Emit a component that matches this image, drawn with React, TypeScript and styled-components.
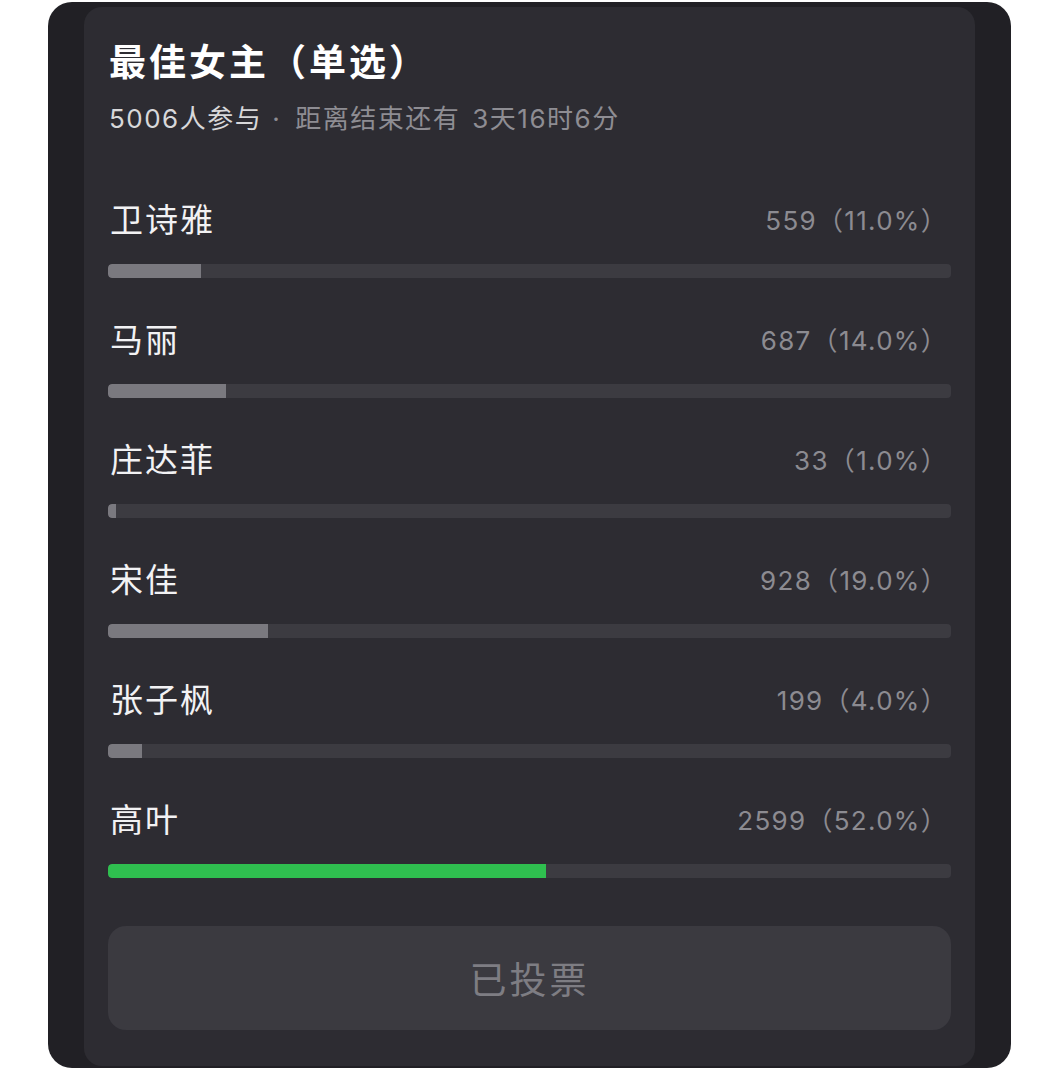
import React from "react";
import styled, { createGlobalStyle } from "styled-components";

const Global = createGlobalStyle`
  html, body { margin: 0; padding: 0; background: #ffffff; }
  body { font-family: Inter, "Noto Sans CJK SC", sans-serif; }
`;

const Page = styled.div`
  width: 1060px;
  height: 1080px;
  padding: 2px 0 0 48px;
  box-sizing: border-box;
`;

const Frame = styled.div`
  width: 963px;
  height: 1066px;
  box-sizing: border-box;
  background: #212025;
  border-radius: 24px;
  padding: 5px 36px 2px 36px;
  display: flex;
`;

const Card = styled.div`
  flex: 1;
  background: #2d2c32;
  border-radius: 18px;
  padding: 29px 24px 36px 24px;
  display: flex;
  flex-direction: column;
`;

const Title = styled.div`
  font-family: "Noto Sans CJK SC", sans-serif;
  font-size: 37px;
  line-height: 48px;
  font-weight: 700;
  color: #ffffff;
  letter-spacing: 3px;
  padding-left: 1px;
`;

const Sub = styled.div`
  margin-top: 18px;
  font-size: 26px;
  line-height: 34px;
  letter-spacing: 1.5px;
  color: #8e8d93;
  padding-left: 1px;
`;

const SubStrong = styled.span`
  color: #d8d8da;
`;

const Dot = styled.span`
  margin: 0 14px 0 10px;
`;

const Gap = styled.span`
  display: inline-block;
  width: 12px;
`;

const List = styled.div`
  margin-top: 60px;
  display: flex;
  flex-direction: column;
  gap: 38px;
`;

const Row = styled.div`
  display: flex;
  flex-direction: column;
  gap: 24px;
`;

const Head = styled.div`
  display: flex;
  justify-content: space-between;
  align-items: center;
  height: 44px;
`;

const Name = styled.span`
  font-family: "Noto Sans CJK SC", sans-serif;
  font-size: 33px;
  letter-spacing: 2px;
  color: #f2f2f4;
  padding-left: 2px;
`;

const Count = styled.span`
  font-size: 26px;
  letter-spacing: 1.3px;
  color: #8c8b91;
  margin-right: 3px;
`;

const Track = styled.div`
  height: 14px;
  background: #3c3b41;
  border-radius: 4px;
  overflow: hidden;
  display: flex;
`;

const Fill = styled.div<{ $win?: boolean }>`
  height: 100%;
  background: ${(p) => (p.$win ? "#2fbf4f" : "#7a797f")};
  border-radius: 4px 0 0 4px;
`;

const Button = styled.div`
  margin-top: 48px;
  height: 104px;
  border-radius: 18px;
  background: #3b3a40;
  display: flex;
  align-items: center;
  justify-content: center;
  font-family: "Noto Sans CJK SC", sans-serif;
  font-size: 37px;
  color: #7e7d83;
  letter-spacing: 3px;
`;

const items = [
  { name: "卫诗雅", count: 559, pct: 11 },
  { name: "马丽", count: 687, pct: 14 },
  { name: "庄达菲", count: 33, pct: 1 },
  { name: "宋佳", count: 928, pct: 19 },
  { name: "张子枫", count: 199, pct: 4 },
  { name: "高叶", count: 2599, pct: 52, win: true },
];

export default function App() {
  return (
    <>
      <Global />
      <Page>
        <Frame>
          <Card>
            <Title>最佳女主（单选）</Title>
            <Sub>
              <SubStrong>5006人参与</SubStrong>
              <Dot>·</Dot>距离结束还有<Gap />3天16时6分
            </Sub>
            <List>
              {items.map((it) => (
                <Row key={it.name}>
                  <Head>
                    <Name>{it.name}</Name>
                    <Count>
                      {it.count}（{it.pct.toFixed(1)}%）
                    </Count>
                  </Head>
                  <Track>
                    <Fill $win={it.win} style={{ width: `${it.pct}%` }} />
                  </Track>
                </Row>
              ))}
            </List>
            <Button>已投票</Button>
          </Card>
        </Frame>
      </Page>
    </>
  );
}
